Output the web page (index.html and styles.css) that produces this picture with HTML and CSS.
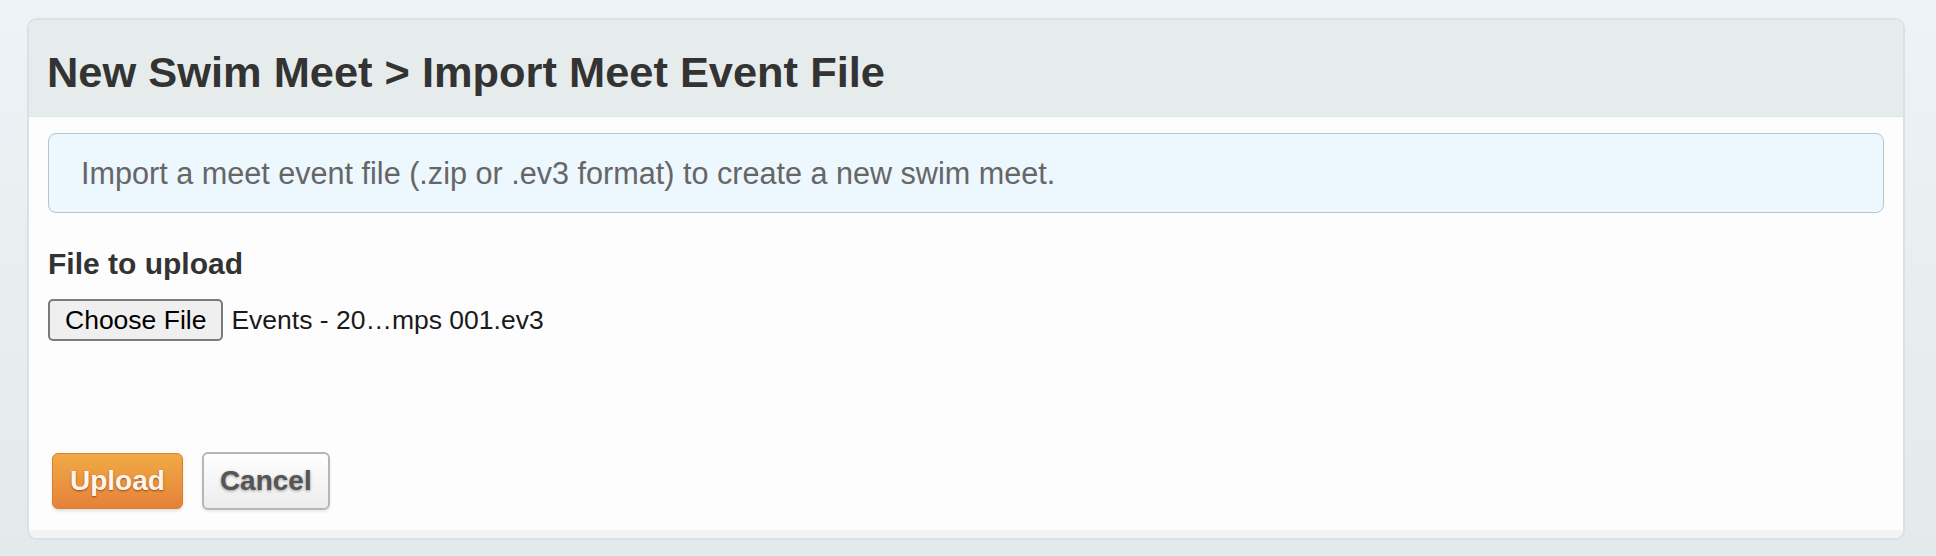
FILE: index.html
```html
<!DOCTYPE html>
<html>
<head>
<meta charset="utf-8">
<link rel="stylesheet" href="styles.css">
</head>
<body>
<div class="panel">
  <div class="panel-head">
    <h1 class="title">New Swim Meet &gt; Import Meet Event File</h1>
  </div>
  <div class="panel-body">
    <div class="info">Import a meet event file (.zip or .ev3 format) to create a new swim meet.</div>
    <div class="label">File to upload</div>
    <div class="file-row">
      <button class="choose">Choose File</button>
      <span class="file-name">Events - 20…mps 001.ev3</span>
    </div>
    <div class="actions">
      <button class="btn btn-primary">Upload</button>
      <button class="btn btn-default">Cancel</button>
    </div>
  </div>
  <div class="panel-foot"></div>
</div>
</body>
</html>
```
FILE: styles.css
```css
html, body {
  margin: 0;
  height: 100%;
}
body {
  box-sizing: border-box;
  padding: 18px 31px 17px 27px;
  background: linear-gradient(180deg, #edf3f6 0%, #e4eaeb 100%);
  font-family: "Liberation Sans", Arial, sans-serif;
  color: #333;
}
.panel {
  border: 2px solid #d8e1e4;
  border-radius: 10px;
  overflow: hidden;
  background: #fdfdfd;
}
.panel-head {
  background: #e6ecec;
  border-bottom: 1px solid #dde5e7;
  padding: 27px 18px 19px;
}
.title {
  margin: 0;
  font-size: 43.4px;
  line-height: 50px;
  font-weight: bold;
  color: #333;
}
.panel-body {
  padding: 16px 19px 20px;
}
.info {
  background: #edf7fe;
  border: 1px solid #b4c6d2;
  border-radius: 8px;
  padding: 22px 32px;
  font-size: 30.6px;
  line-height: 34px;
  color: #666;
}
.label {
  margin-top: 34px;
  font-size: 30px;
  line-height: 34px;
  font-weight: bold;
  color: #333;
}
.file-row {
  margin-top: 18px;
  display: flex;
  align-items: center;
  gap: 8px;
  height: 42px;
}
.choose {
  box-sizing: border-box;
  height: 42px;
  padding: 0 15px;
  border: 2px solid #7a7a7a;
  border-radius: 5px;
  background: #efefef;
  font-family: "Liberation Sans", Arial, sans-serif;
  font-size: 26.5px;
  color: #000;
}
.file-name {
  font-size: 26.5px;
  color: #1a1a1a;
}
.actions {
  margin-top: 111px;
  margin-left: 4px;
  display: flex;
  gap: 19px;
  align-items: flex-start;
}
.btn {
  font-family: "Liberation Sans", Arial, sans-serif;
  font-weight: bold;
  font-size: 28px;
  line-height: 30px;
  border-radius: 6px;
  cursor: pointer;
}
.btn-primary {
  padding: 12px 17px;
  border: 1px solid #d7802d;
  background: linear-gradient(180deg, #f1aa45 0%, #e5813a 100%);
  color: #fff4ea;
  text-shadow: 0 1px 2px rgba(80, 30, 0, 0.6);
  box-shadow: 0 2px 3px rgba(0, 0, 0, 0.12);
  margin-top: 1px;
}
.btn-default {
  padding: 12px 16px;
  border: 2px solid #b6b6b6;
  background: linear-gradient(180deg, #ffffff 0%, #ececec 100%);
  color: #555;
  text-shadow: 0 1px 3px rgba(0, 0, 0, 0.4);
  box-shadow: 0 2px 3px rgba(0, 0, 0, 0.08);
}
.panel-foot {
  height: 8px;
  background: #f2f4f4;
}
```
